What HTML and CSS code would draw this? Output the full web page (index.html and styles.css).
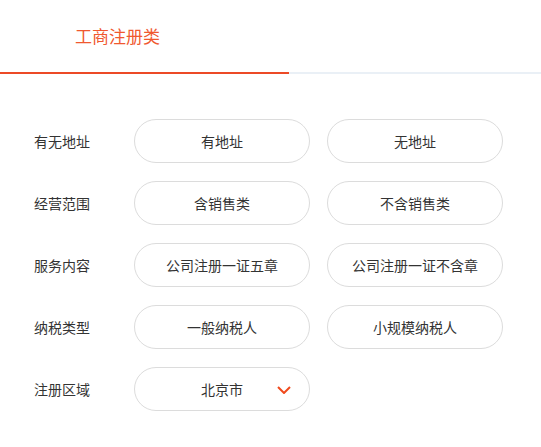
FILE: index.html
```html
<!DOCTYPE html>
<html lang="zh">
<head>
<meta charset="utf-8">
<link rel="stylesheet" href="styles.css">
</head>
<body>
<div class="tabs">
  <div class="tab active">工商注册类</div>
</div>
<div class="tab-bar"><div class="tab-bar-fill"></div></div>
<div class="form">
  <div class="label">有无地址</div>
  <div class="opt">有地址</div>
  <div class="opt">无地址</div>

  <div class="label">经营范围</div>
  <div class="opt">含销售类</div>
  <div class="opt">不含销售类</div>

  <div class="label">服务内容</div>
  <div class="opt">公司注册一证五章</div>
  <div class="opt">公司注册一证不含章</div>

  <div class="label">纳税类型</div>
  <div class="opt">一般纳税人</div>
  <div class="opt">小规模纳税人</div>

  <div class="label">注册区域</div>
  <div class="opt select">北京市
    <svg class="chev" width="14" height="8" viewBox="0 0 14 8"><path d="M1 1 L7 7 L13 1" fill="none" stroke="#f04a1d" stroke-width="2"/></svg>
  </div>
</div>
</body>
</html>
```
FILE: styles.css
```css
* { box-sizing: border-box; }
body {
  margin: 0;
  background: #fff;
  font-family: "Noto Sans CJK SC", "Microsoft YaHei", sans-serif;
  color: #333;
}
.tabs {
  height: 72px;
  display: flex;
  align-items: center;
}
.tab {
  padding-left: 75px;
  font-size: 17px;
  line-height: 20px;
  color: #f0582f;
  padding-bottom: 1px;
}
.tab-bar {
  height: 2px;
  background: #eaf0f6;
}
.tab-bar-fill {
  width: 289px;
  height: 2px;
  background: #ec4a26;
}
.form {
  display: grid;
  grid-template-columns: 83px 176px 176px;
  column-gap: 17px;
  row-gap: 18px;
  grid-auto-rows: 44px;
  padding: 45px 0 0 34px;
}
.label {
  display: flex;
  align-items: center;
  font-size: 14px;
  color: #333;
}
.opt {
  display: flex;
  align-items: center;
  justify-content: center;
  border: 1px solid #dcdcdc;
  border-radius: 22px;
  font-size: 14px;
  color: #333;
  position: relative;
}
.chev {
  position: absolute;
  left: 142px;
  top: 18px;
}
```
